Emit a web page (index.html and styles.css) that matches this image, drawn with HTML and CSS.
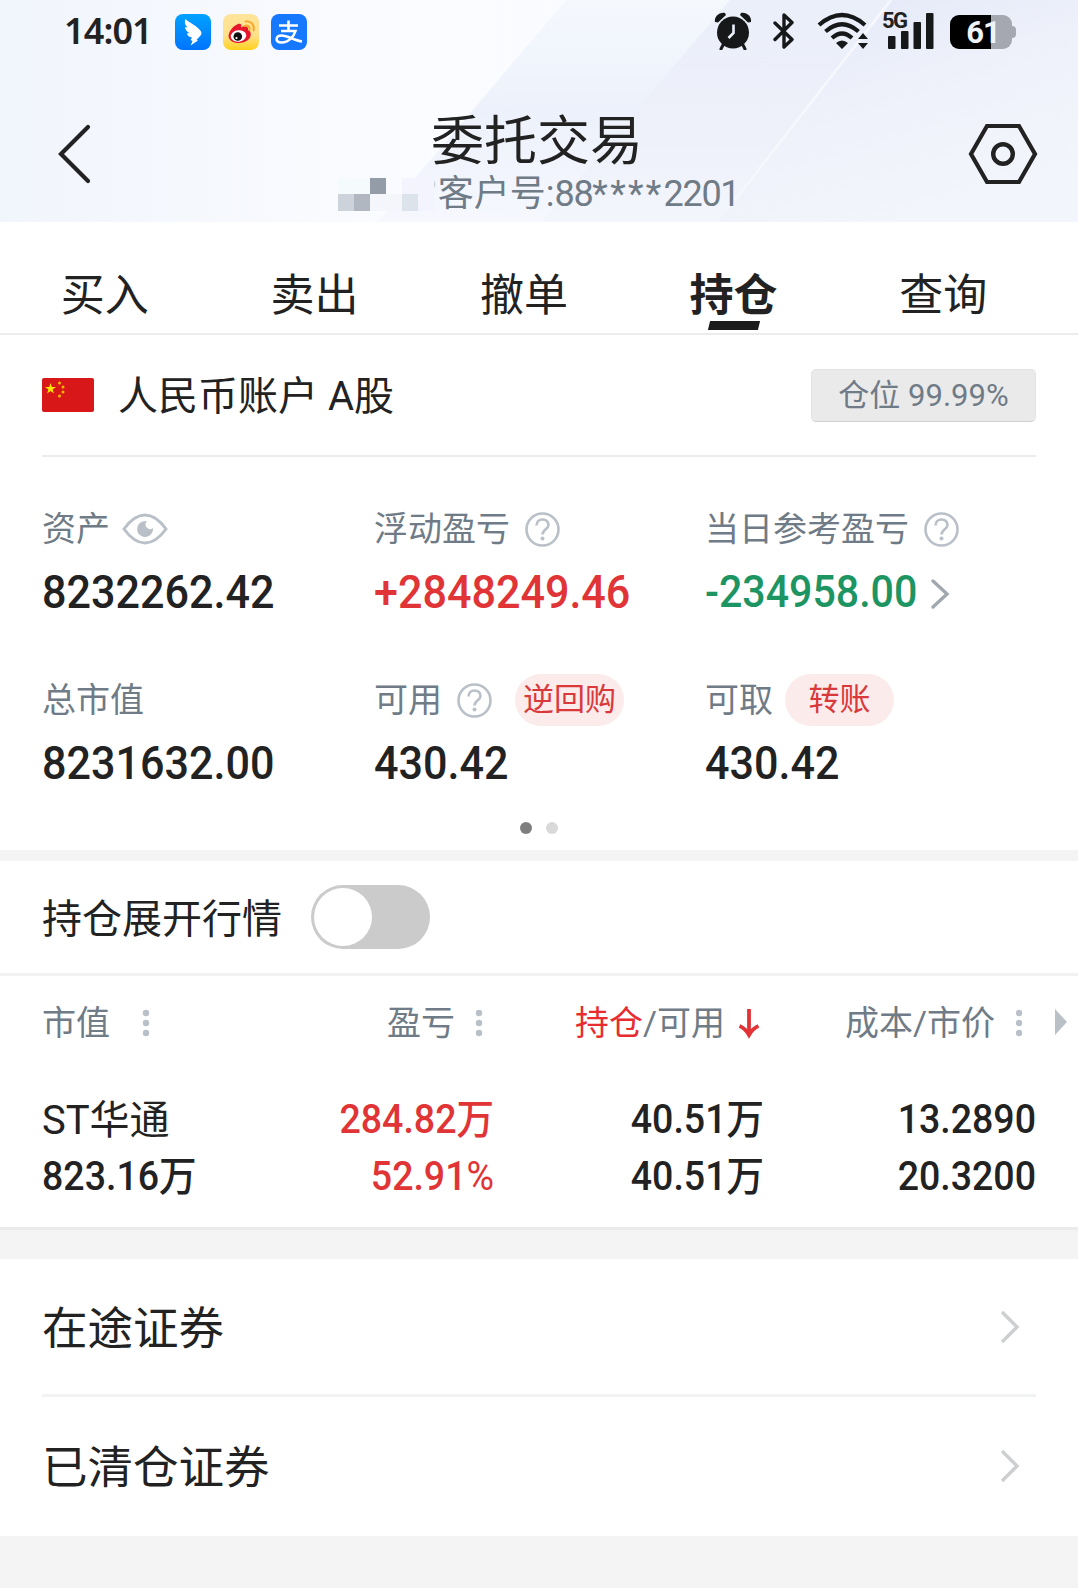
FILE: index.html
```html
<!DOCTYPE html>
<html lang="zh-CN">
<head>
    <meta charset="UTF-8">
    <meta name="viewport" content="width=device-width, initial-scale=1.0">
    <title>委托交易</title>
    <link rel="stylesheet" href="styles.css">
</head>
<body>
    <header class="header">
        <svg class="header-bg" viewBox="0 0 1078 222" preserveAspectRatio="none">
            <defs>
                <linearGradient id="base" x1="0" y1="0" x2="1" y2="0">
                    <stop offset="0" stop-color="#f1f5fc"/>
                    <stop offset="0.4" stop-color="#fbfcff"/>
                    <stop offset="1" stop-color="#f8f9fe"/>
                </linearGradient>
                <linearGradient id="band" x1="0" y1="0" x2="0" y2="1">
                    <stop offset="0" stop-color="#ebeff9"/>
                    <stop offset="0.6" stop-color="#eef0fa"/>
                    <stop offset="1" stop-color="#f4f6fd"/>
                </linearGradient>
                <linearGradient id="bandLight" x1="0" y1="0" x2="0" y2="1">
                    <stop offset="0" stop-color="#f5f9fe"/>
                    <stop offset="0.5" stop-color="#edf1fb"/>
                    <stop offset="1" stop-color="#f6f8fe"/>
                </linearGradient>
                <linearGradient id="bandRight" x1="0" y1="0" x2="0.5" y2="1">
                    <stop offset="0" stop-color="#e2e7f8"/>
                    <stop offset="0.5" stop-color="#eef1fa"/>
                    <stop offset="1" stop-color="#f3f5fc"/>
                </linearGradient>
            </defs>
            <rect width="1078" height="222" fill="url(#base)"/>
            <polygon points="566,0 1078,0 1078,222 378,222" fill="url(#bandLight)"/>
            <polygon points="730,0 1078,0 1078,222 541,222" fill="url(#band)"/>
            <polygon points="892,0 1078,0 1078,222 718,222" fill="url(#bandRight)"/>
            <line x1="891" y1="0" x2="735" y2="200" stroke="#f6f8fd" stroke-width="2.5"/>
        </svg>

        <div class="status-bar">
            <span class="time">14:01</span>
            <div class="apps">
                <svg width="36" height="36" viewBox="0 0 36 36">
                    <defs>
                        <linearGradient id="ding" x1="0" y1="0" x2="0" y2="1">
                            <stop offset="0" stop-color="#00a2ff"/>
                            <stop offset="1" stop-color="#0074ff"/>
                        </linearGradient>
                    </defs>
                    <rect width="36" height="36" rx="8" fill="url(#ding)"/>
                    <path d="M10.500 5 C13 8 20 10.500 24 15 C26.500 17.500 27 19 26 21 L21.500 26 L23 26.500 L15.500 31.500 L17.500 27 L15.500 26 L17 23.500 C14 23 12 21 12 19.500 L14.500 19 C12 18 10 15.500 10 13 L12.500 13.500 C10 11 9 8 10.500 5 Z" fill="#fff"/>
                </svg>
                <svg width="36" height="36" viewBox="0 0 36 36">
                    <defs>
                        <linearGradient id="weibo" x1="0" y1="0" x2="0" y2="1">
                            <stop offset="0" stop-color="#ffe49a"/>
                            <stop offset="0.6" stop-color="#ffe08a"/>
                            <stop offset="1" stop-color="#ffd11c"/>
                        </linearGradient>
                    </defs>
                    <rect width="36" height="36" rx="8" fill="url(#weibo)"/>
                    <path d="M5.500 22 C6 17 10 12 15 10 C18 9 19 11 18 13.500 C21 11 26 12 25 16 C29 17.500 28.500 23 25 26 C19 31 6 30 5.500 22 Z" fill="#e6162d"/>
                    <ellipse cx="15.500" cy="22" rx="7.800" ry="5.800" fill="#fff" transform="rotate(-8 15.500 22)"/>
                    <circle cx="14.800" cy="22.500" r="4.300" fill="#111"/>
                    <circle cx="13.500" cy="24" r="1.100" fill="#fff"/>
                    <path d="M21.500 12 C24 10.500 27.500 12.500 26.500 16 M22.500 7.500 C28 6.500 32 11 30.500 16.500" fill="none" stroke="#f9a62b" stroke-width="1.900" stroke-linecap="round"/>
                </svg>
                <svg width="36" height="36" viewBox="0 0 36 36">
                    <rect width="36" height="36" rx="8" fill="#1677ff"/>
                    <path d="M8 11.500 H27 M17.500 6.500 V17 M10 17 H24.500 C23 22 18 28.500 10.500 28.500 C3.500 28.500 4.500 21.500 10.500 21.500 C17 21.500 23 26.500 31 27.500" fill="none" stroke="#fff" stroke-width="2.600"/>
                </svg>
            </div>
            <div class="system">
                <svg width="38" height="38" viewBox="0 0 38 38" fill="#17181a">
                    <circle cx="19" cy="20.500" r="16"/>
                    <path d="M1 10 C0 5 5 0 11 1 L12 3 L4 10.500 Z M37 10 C38 5 33 0 27 1 L26 3 L34 10.500 Z"/>
                    <path d="M9 33 L7 37 M29 33 L31 37" stroke="#17181a" stroke-width="3" stroke-linecap="round"/>
                    <path d="M19.500 12.500 V21 L14.500 26" fill="none" stroke="#eef1fa" stroke-width="2.600"/>
                </svg>
                <svg class="bluetooth" width="22" height="38" viewBox="0 0 22 38">
                    <path d="M2 11 L19 27.500 L11 35 V3 L19 10.500 L2 27.500" fill="none" stroke="#17181a" stroke-width="3.400" stroke-linejoin="round" stroke-linecap="round"/>
                </svg>
                <svg class="wifi" width="52" height="38" viewBox="0 0 52 38">
                    <path d="M2 13 Q25 -7 48 13 M8.500 19.500 Q25 5 41.500 19.500 M15 26 Q25 17 35 26" fill="none" stroke="#17181a" stroke-width="4.200"/>
                    <path d="M19 31 Q25 26 31 31 L25 37 Z M46 21 L51 27 H41 Z M46 37 L51 31 H41 Z" fill="#17181a"/>
                </svg>
                <div class="signal">
                    <span class="network">5G</span>
                    <svg width="52" height="38" viewBox="0 0 52 38" fill="#17181a">
                        <rect x="6" y="24" width="7.500" height="13" rx="1"/>
                        <rect x="19" y="19" width="7.500" height="18" rx="1"/>
                        <rect x="31.500" y="10" width="7.500" height="27" rx="1"/>
                        <rect x="44" y="1" width="7.500" height="36" rx="1"/>
                    </svg>
                </div>
                <div class="battery"><span>61</span></div>
            </div>
        </div>

        <div class="title-bar">
            <svg class="back" width="34" height="62" viewBox="0 0 34 62">
                <path d="M31 4 L4 31 L31 58" fill="none" stroke="#222" stroke-width="4.200" stroke-linecap="round"/>
            </svg>
            <div class="title-box">
                <h1>委托交易</h1>
                <div class="client">
                    <svg class="mosaic" width="98" height="33" viewBox="0 0 98 33">
                        <rect width="32" height="16" fill="#f5fafd"/>
                        <rect x="32" width="16" height="16" fill="#949ca7"/>
                        <rect x="64" width="32" height="16" fill="#f3f4fd"/>
                        <rect y="16" width="16" height="17" fill="#ccd3db"/>
                        <rect x="16" y="16" width="16" height="17" fill="#b0b7c0"/>
                        <rect x="32" y="16" width="32" height="17" fill="#f5f6fb"/>
                        <rect x="64" y="16" width="16" height="17" fill="#dce3ea"/>
                        <rect x="80" y="16" width="16" height="17" fill="#f3f4fd"/>
                        <path d="M96 2 q3 5 0 8 z" fill="#cdd3da"/>
                    </svg>
                    <span>客户号:<i>88</i><i class="stars">****</i><i>2201</i></span>
                </div>
            </div>
            <svg class="settings" width="72" height="62" viewBox="0 0 72 62">
                <path d="M20 3 H52 L68 31 L52 59 H20 L4 31 Z" fill="none" stroke="#222" stroke-width="4.200"/>
                <circle cx="36" cy="31" r="9.800" fill="none" stroke="#222" stroke-width="4.400"/>
            </svg>
        </div>
    </header>

    <nav class="tabs">
        <a class="tab">买入</a>
        <a class="tab">卖出</a>
        <a class="tab">撤单</a>
        <a class="tab active">持仓</a>
        <a class="tab">查询</a>
    </nav>

    <section class="account">
        <div class="account-head">
            <svg class="flag" width="52" height="34" viewBox="0 0 52 34">
                <rect width="52" height="34" rx="2" fill="#d71718"/>
                <polygon points="8.500,5 9.800,9 14,9 10.600,11.500 11.900,15.500 8.500,13 5.100,15.500 6.400,11.500 3,9 7.200,9" fill="#ffe600"/>
                <g fill="#f7b500">
                    <circle cx="17.500" cy="5" r="1.500"/>
                    <circle cx="21" cy="9" r="1.500"/>
                    <circle cx="21" cy="14" r="1.500"/>
                    <circle cx="17.500" cy="18" r="1.500"/>
                </g>
            </svg>
            <span class="account-name">人民币账户 A股</span>
            <span class="position">仓位 99.99%</span>
        </div>

        <div class="summary">
            <div class="item">
                <div class="label">资产
                    <svg class="eye" width="46" height="32" viewBox="0 0 46 32">
                        <path d="M2 16 Q12 2 23 2 T44 16 Q34 30 23 30 T2 16 Z" fill="none" stroke="#b9c0c7" stroke-width="3"/>
                        <path d="M23 8 A8 8 0 1 0 31 15 A4.500 4.500 0 0 1 25 8.300 Z" fill="#b9c0c7"/>
                    </svg>
                </div>
                <div class="value"><span>8232262.42</span></div>
            </div>
            <div class="item">
                <div class="label">浮动盈亏
                    <svg class="help" width="35" height="35" viewBox="0 0 35 35">
                        <circle cx="17.500" cy="17.500" r="16"/>
                        <path d="M11.500 13.500 C11.500 5.500 23.500 5.500 23.500 13 C23.500 17 17.500 17.500 17.500 22.500"/>
                        <circle class="dot" cx="17.500" cy="26.500" r="2"/>
                    </svg>
                </div>
                <div class="value up"><span>+2848249.46</span></div>
            </div>
            <div class="item">
                <div class="label">当日参考盈亏
                    <svg class="help" width="35" height="35" viewBox="0 0 35 35">
                        <circle cx="17.500" cy="17.500" r="16"/>
                        <path d="M11.500 13.500 C11.500 5.500 23.500 5.500 23.500 13 C23.500 17 17.500 17.500 17.500 22.500"/>
                        <circle class="dot" cx="17.500" cy="26.500" r="2"/>
                    </svg>
                </div>
                <div class="value down"><span>-234958.00</span>
                    <svg width="20" height="32" viewBox="0 0 20 32">
                        <path d="M3 3 L17 16 L3 29" fill="none" stroke="#a1a8af" stroke-width="3.400" stroke-linecap="round"/>
                    </svg>
                </div>
            </div>
            <div class="item">
                <div class="label">总市值</div>
                <div class="value"><span>8231632.00</span></div>
            </div>
            <div class="item">
                <div class="label">可用
                    <svg class="help" width="35" height="35" viewBox="0 0 35 35">
                        <circle cx="17.500" cy="17.500" r="16"/>
                        <path d="M11.500 13.500 C11.500 5.500 23.500 5.500 23.500 13 C23.500 17 17.500 17.500 17.500 22.500"/>
                        <circle class="dot" cx="17.500" cy="26.500" r="2"/>
                    </svg>
                    <span class="pill repo">逆回购</span>
                </div>
                <div class="value"><span>430.42</span></div>
            </div>
            <div class="item">
                <div class="label">可取 <span class="pill">转账</span></div>
                <div class="value"><span>430.42</span></div>
            </div>
        </div>

        <div class="pager">
            <span class="on"></span>
            <span></span>
        </div>
    </section>

    <section class="expand">
        <span>持仓展开行情</span>
        <div class="switch"></div>
    </section>

    <section class="holdings">
        <div class="row head">
            <div>市值<svg class="sort first" width="8" height="28" viewBox="0 0 8 28"><circle cx="4" cy="4" r="3.200"/><circle cx="4" cy="14" r="3.200"/><circle cx="4" cy="24" r="3.200"/></svg></div>
            <div>盈亏<svg class="sort" width="8" height="28" viewBox="0 0 8 28"><circle cx="4" cy="4" r="3.200"/><circle cx="4" cy="14" r="3.200"/><circle cx="4" cy="24" r="3.200"/></svg></div>
            <div><b>持仓</b>/可用<svg class="arrow" width="24" height="32" viewBox="0 0 24 32"><path d="M12 2 V28 M2.500 19 Q8 21 12 28 Q16 21 21.500 19" fill="none" stroke="#e23436" stroke-width="3.800"/></svg></div>
            <div>成本/市价<svg class="sort last" width="8" height="28" viewBox="0 0 8 28"><circle cx="4" cy="4" r="3.200"/><circle cx="4" cy="14" r="3.200"/><circle cx="4" cy="24" r="3.200"/></svg></div>
            <svg class="more" width="12" height="26" viewBox="0 0 12 26"><path d="M0 0 L12 13 L0 26 Z" fill="#b9c0c7"/></svg>
        </div>
        <div class="row stock">
            <div class="name">ST华通</div>
            <div class="up">284.82<em>万</em></div>
            <div>40.51<em>万</em></div>
            <div>13.2890</div>
        </div>
        <div class="row stock">
            <div>823.16<em>万</em></div>
            <div class="up">52.91<u>%</u></div>
            <div>40.51<em>万</em></div>
            <div>20.3200</div>
        </div>
    </section>

    <section class="links">
        <a class="link"><span>在途证券</span>
            <svg width="22" height="36" viewBox="0 0 22 36"><path d="M3 3 L18 18 L3 33" fill="none" stroke="#cdcfd1" stroke-width="3.400"/></svg>
        </a>
        <a class="link"><span>已清仓证券</span>
            <svg width="22" height="36" viewBox="0 0 22 36"><path d="M3 3 L18 18 L3 33" fill="none" stroke="#cdcfd1" stroke-width="3.400"/></svg>
        </a>
    </section>
</body>
</html>
```
FILE: styles.css
```css
* {
    box-sizing: border-box;
}
body {
    margin: 0;
    min-height: 1588px;
    background-color: #f4f4f4;
    color: #222;
    font-family: Roboto, "Noto Sans CJK SC", sans-serif;
    font-weight: 400;
}
svg {
    display: block;
    flex-shrink: 0;
}
i, em, u {
    font-style: normal;
    text-decoration: none;
}

/* header */
.header {
    position: relative;
    height: 222px;
}
.header-bg {
    position: absolute;
    top: 0;
    left: 0;
    width: 100%;
    height: 100%;
    z-index: -1;
}
.status-bar {
    display: flex;
    align-items: center;
    height: 64px;
    padding: 0 62px 0 64px;
}
.time {
    width: 111px;
    font-family: "Noto Sans", sans-serif;
    font-size: 36px;
    font-weight: 600;
    letter-spacing: -0.9px;
    line-height: 62px;
    height: 64px;
}
.apps {
    display: flex;
    gap: 12px;
}
.system {
    display: flex;
    align-items: center;
    margin-left: auto;
    margin-top: -2px;
}
.bluetooth {
    margin-left: 21px;
}
.wifi {
    margin-left: 22px;
}
.signal {
    position: relative;
    margin-left: 13px;
}
.network {
    position: absolute;
    top: 0;
    left: 0;
    font-size: 22px;
    font-weight: 700;
    line-height: 17px;
    letter-spacing: -1.5px;
}
.battery {
    position: relative;
    width: 62px;
    height: 34px;
    margin: 1px 4px 0 16px;
    padding-left: 4px;
    border-radius: 9px;
    background: linear-gradient(to right, #000 41px, #a5a8b0 41px);
    color: #f1f3fb;
    font-size: 31px;
    font-weight: 700;
    line-height: 36px;
    text-align: center;
    letter-spacing: -1px;
}
.battery::after {
    content: '';
    position: absolute;
    right: -4px;
    top: 11px;
    width: 4px;
    height: 12px;
    border-radius: 0 4px 4px 0;
    background-color: #a5a8b0;
}
.title-bar {
    display: flex;
    justify-content: space-between;
    height: 158px;
    padding: 0 39px 0 57px;
}
.back, .settings {
    margin-top: 59px;
}
.title-box {
    display: flex;
    flex-direction: column;
    align-items: center;
    width: 402px;
    margin-left: 19px;
}
h1 {
    margin: 46px 0 0 -3px;
    font-size: 53px;
    font-weight: 400;
    line-height: 64px;
}
.client {
    display: flex;
    align-items: center;
    gap: 2px;
    height: 44px;
    margin-top: -2px;
    color: #6f7b86;
    font-size: 36px;
    line-height: 46px;
    white-space: nowrap;
}
.client i {
    letter-spacing: -1.3px;
}
.client .stars {
    letter-spacing: 2.3px;
}

/* tabs */
.tabs {
    display: flex;
    height: 113px;
    padding-right: 30px;
    background-color: #fff;
    border-bottom: 2px solid #ebeced;
}
.tab {
    position: relative;
    flex: 1;
    padding-top: 42px;
    font-size: 44px;
    line-height: 64px;
    text-align: center;
}
.active {
    font-weight: 700;
}
.active::after {
    content: '';
    position: absolute;
    left: 50%;
    bottom: 3px;
    width: 50px;
    height: 9px;
    margin-left: -25px;
    background-color: #1b1b1b;
    transform: skewX(-14deg);
}

/* account */
.account {
    height: 515px;
    padding: 0 42px;
    background-color: #fff;
}
.account-head {
    display: flex;
    align-items: center;
    height: 122px;
    border-bottom: 2px solid #ebeced;
}
.account-name {
    margin: 3px 0 0 24px;
    font-size: 40px;
    line-height: 60px;
}
.position {
    width: 225px;
    height: 53px;
    margin-left: auto;
    border: 1px solid #e3e3e4;
    border-bottom-color: #cfcfd0;
    border-radius: 5px;
    background-color: #eaeaeb;
    color: #6f7b86;
    font-size: 31px;
    line-height: 52px;
    text-align: center;
}
.summary {
    display: grid;
    grid-template-columns: 332px 331px 331px;
    grid-template-rows: 171px 171px;
    padding-top: 46px;
}
.label {
    display: flex;
    align-items: center;
    height: 52px;
    color: #6f7b86;
    font-size: 34px;
    line-height: 52px;
    white-space: nowrap;
}
.eye {
    margin-left: 12px;
}
.help {
    margin-left: 15px;
    fill: none;
    stroke: #b9c0c7;
    stroke-width: 2.6;
}
.help .dot {
    fill: #b9c0c7;
    stroke: none;
}
.pill {
    width: 109px;
    height: 52px;
    margin-left: 12px;
    border-radius: 26px;
    background-color: #fcebeb;
    color: #d9393b;
    font-size: 31px;
    text-align: center;
}
.repo {
    margin-left: 23px;
}
.value {
    display: flex;
    align-items: center;
    height: 74px;
    font-size: 47px;
    font-weight: 500;
    line-height: 74px;
}
.value span {
    transform: scaleX(0.917);
    transform-origin: left;
}
.up {
    color: #e03436;
}
.down {
    color: #1d9563;
    font-size: 43.5px;
}
.down span {
    transform: scaleX(0.945);
    padding-top: 2px;
}
.down svg {
    margin-left: 0;
    margin-top: 4px;
}
.pager {
    display: flex;
    justify-content: center;
    gap: 14px;
    margin-top: -23px;
}
.pager span {
    width: 12px;
    height: 12px;
    border-radius: 50%;
    background-color: #d9d9d9;
}
.pager .on {
    background-color: #7f7f7f;
}

/* expand switch */
.expand {
    display: flex;
    align-items: center;
    height: 115px;
    margin-top: 11px;
    padding-left: 42px;
    background-color: #fff;
    border-bottom: 3px solid #f1f2f3;
    font-size: 40px;
}
.expand span {
    margin-bottom: 3px;
}
.switch {
    width: 119px;
    height: 64px;
    margin-left: 29px;
    padding: 3px;
    border-radius: 32px;
    background-color: #cbcbcb;
}
.switch::before {
    content: '';
    display: block;
    width: 58px;
    height: 58px;
    border-radius: 50%;
    background-color: #fff;
}

/* holdings */
.holdings {
    height: 254px;
    background-color: #fff;
    border-bottom: 3px solid #ebebeb;
}
.row {
    display: grid;
    grid-template-columns: 200px 252px 270px 272px;
    height: 57px;
    padding-left: 42px;
    line-height: 57px;
    white-space: nowrap;
}
.row > div {
    display: flex;
    align-items: center;
    justify-content: flex-end;
}
.row > div:first-child {
    justify-content: flex-start;
}
.head {
    position: relative;
    height: 94px;
    margin-bottom: 20px;
    color: #6f7b86;
    font-size: 34px;
}
.head b {
    color: #e82c30;
    font-weight: 400;
}
.sort {
    margin: 0 11px 0 20px;
    fill: #b9c0c7;
}
.first {
    margin-left: 32px;
}
.last {
    margin-right: 13px;
}
.arrow {
    margin: 0 3px 0 12px;
}
.more {
    position: absolute;
    right: 11px;
    top: 33px;
}
.stock {
    font-size: 41px;
    font-weight: 500;
}
.stock > div {
    transform: scaleX(0.915);
    transform-origin: right;
}
.stock > div:first-child {
    transform-origin: left;
}
.stock em {
    margin-top: 2px;
    font-size: 41px;
}
.stock u {
    font-weight: 400;
}
.stock .name {
    padding-top: 2px;
    transform: none;
    font-size: 40px;
    font-weight: 400;
}

/* links */
.links {
    height: 277px;
    margin-top: 29px;
    padding: 0 42px;
    background-color: #fff;
}
.link {
    display: flex;
    align-items: center;
    justify-content: space-between;
    height: 138px;
    padding-right: 15px;
    font-size: 45.5px;
}
.link span {
    margin-bottom: 4px;
}
.link:first-child {
    border-bottom: 3px solid #f1f2f3;
}
```
